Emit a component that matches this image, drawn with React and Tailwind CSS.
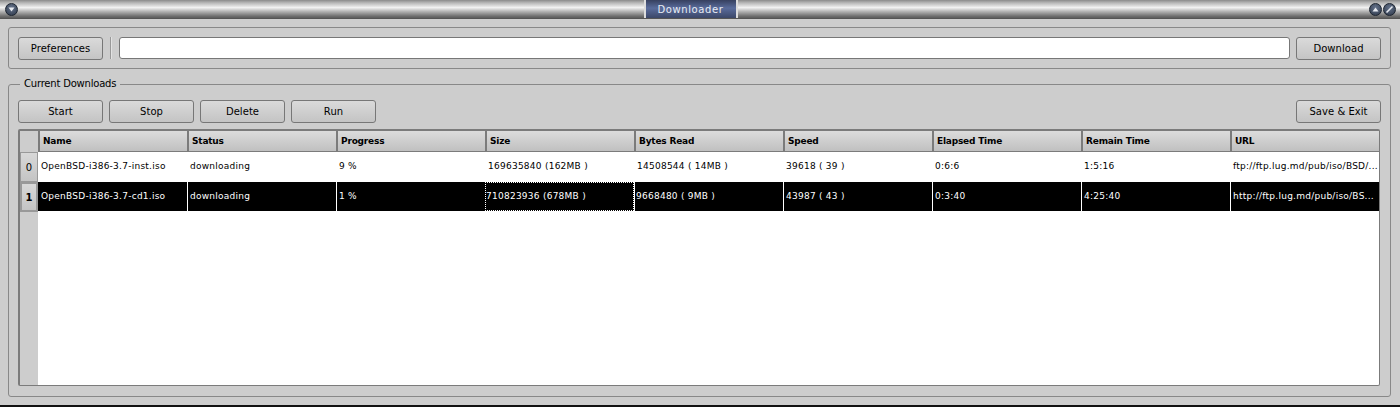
import React from 'react';

const columns = ['Name', 'Status', 'Progress', 'Size', 'Bytes Read', 'Speed', 'Elapsed Time', 'Remain Time', 'URL'];

const rows = [
  ['OpenBSD-i386-3.7-inst.iso', 'downloading', '9 %', '169635840 (162MB )', '14508544 ( 14MB )', '39618 ( 39 )', '0:6:6', '1:5:16', 'ftp://ftp.lug.md/pub/iso/BSD/...'],
  ['OpenBSD-i386-3.7-cd1.iso', 'downloading', '1 %', '710823936 (678MB )', '9668480 ( 9MB )', '43987 ( 43 )', '0:3:40', '4:25:40', 'http://ftp.lug.md/pub/iso/BS...'],
];

function Btn({ children, className = '' }) {
  return (
    <button className={`h-[23px] w-[85px] shrink-0 rounded-[3px] border border-[#777] bg-[linear-gradient(#dadada,#c4c4c4)] text-[10px] tracking-[0.05px] text-black ${className}`}>
      {children}
    </button>
  );
}

function Knob({ children }) {
  return (
    <div className="flex h-[13px] w-[13px] items-center justify-center rounded-full border border-[#1c2430] bg-[radial-gradient(circle_at_50%_35%,#66748c,#2c3648)]">
      {children}
    </div>
  );
}

// selected row draws a white cell rule, the Size cell has the dotted focus box
function cellClass(i, j) {
  if (i === 0) return 'pl-[3px]';
  if (j === 0) return 'pl-[3px]';
  if (j === 3) return 'border border-dotted border-white pl-0';
  if (j === 4) return 'border-l border-white pl-[1px]';
  return 'border-l border-white pl-[2px]';
}

export default function App() {
  return (
    <div className="flex h-[407px] w-[1400px] flex-col overflow-hidden border-b-2 border-[#111] bg-[#cdcdcd] font-['DejaVu_Sans',sans-serif]">
      {/* title bar */}
      <div className="flex h-[19px] shrink-0 items-center justify-between border-b border-[#555] bg-[linear-gradient(#8a8a8a_0%,#b5b5b5_15%,#f2f2f2_42%,#b0b0b0_65%,#6e6e6e_90%,#5c5c5c_100%)] pl-[5px] pr-[4px]">
        <Knob>
          <svg width="7" height="5" viewBox="0 0 7 5"><path d="M0.5 0.5h6L3.5 4.5z" fill="#e6e9ef" /></svg>
        </Knob>
        <div className="ml-[-6px] flex h-[18px] w-[94px] items-center justify-center border-x-2 border-[#ddd] bg-[linear-gradient(#36405f,#5a6c9c_45%,#3b4768)] text-[10px] tracking-[0.6px] text-[#e8ecf4]">
          Downloader
        </div>
        <div className="flex gap-[1px]">
          <Knob>
            <svg width="7" height="5" viewBox="0 0 7 5"><path d="M0.5 4.5h6L3.5 0.5z" fill="#e6e9ef" /></svg>
          </Knob>
          <Knob>
            <svg width="9" height="9" viewBox="0 0 9 9"><path d="M1.5 7.5L7.5 1.5" stroke="#e6e9ef" strokeWidth="1.6" /></svg>
          </Knob>
        </div>
      </div>

      <div className="flex min-h-0 flex-1 flex-col pl-[8px] pr-[9px] pt-[8px]">
        {/* url bar */}
        <div className="flex h-[42px] shrink-0 items-center rounded-[3px] border border-[#888] px-[9px]">
          <Btn>Preferences</Btn>
          <div className="mx-[7px] h-[22px] w-[2px] border-l border-[#999] bg-[#e2e2e2]" />
          <div className="h-[22px] flex-1 rounded-[3px] border border-[#777] bg-white" />
          <Btn className="ml-[6px]">Download</Btn>
        </div>

        {/* downloads */}
        <fieldset className="mt-[8px] h-[320px] min-w-0 rounded-[3px] border border-[#888] px-[9px]">
          <legend className="ml-[2px] px-[4px] text-[10px] leading-[14px] tracking-[-0.2px] text-black">Current Downloads</legend>
          <div className="mt-[9px] flex gap-[6px]">
            <Btn>Start</Btn>
            <Btn>Stop</Btn>
            <Btn>Delete</Btn>
            <Btn>Run</Btn>
            <Btn className="ml-auto">Save &amp; Exit</Btn>
          </div>

          <div className="mr-[1px] mt-[6px] flex h-[257px] flex-col rounded-[2px] border-2 border-b border-r border-[#7b7b7b] bg-white">
            <div className="flex h-[21px] shrink-0 bg-[#cdcdcd]">
              <div className="w-[18px] shrink-0" />
              {columns.map(name => (
                <div key={name} className="flex w-[149px] shrink-0 items-center border-b border-l-2 border-[#7b7b7b] bg-[linear-gradient(#dcdcdc,#c0c0c0)] pl-[3px] pt-[1px] text-[9px] font-bold tracking-[-0.2px] text-black">
                  {name}
                </div>
              ))}
            </div>
            <div className="flex min-h-0 flex-1">
              <div className="w-[18px] shrink-0 bg-[#cdcdcd]">
                {rows.map((r, i) => (
                  <div key={i} className={`flex h-[30px] items-center justify-center border border-[#999] bg-[linear-gradient(#d8d8d8,#c4c4c4)] text-[10px] ${i === 1 ? 'border-2 border-[#7b7b7b] font-bold' : ''}`}>
                    {i}
                  </div>
                ))}
              </div>
              <div className="min-w-0 flex-1">
                {rows.map((r, i) => (
                  <div key={i} className={`flex h-[29px] ${i === 1 ? 'mt-[1px] bg-black text-white' : 'text-black'}`}>
                    {r.map((cell, j) => (
                      <div key={j} className={`flex w-[149px] shrink-0 items-center overflow-hidden whitespace-nowrap text-[9px] tracking-[0.25px] ${cellClass(i, j)}`}>
                        {cell}
                      </div>
                    ))}
                  </div>
                ))}
              </div>
            </div>
          </div>
        </fieldset>
      </div>
    </div>
  );
}
